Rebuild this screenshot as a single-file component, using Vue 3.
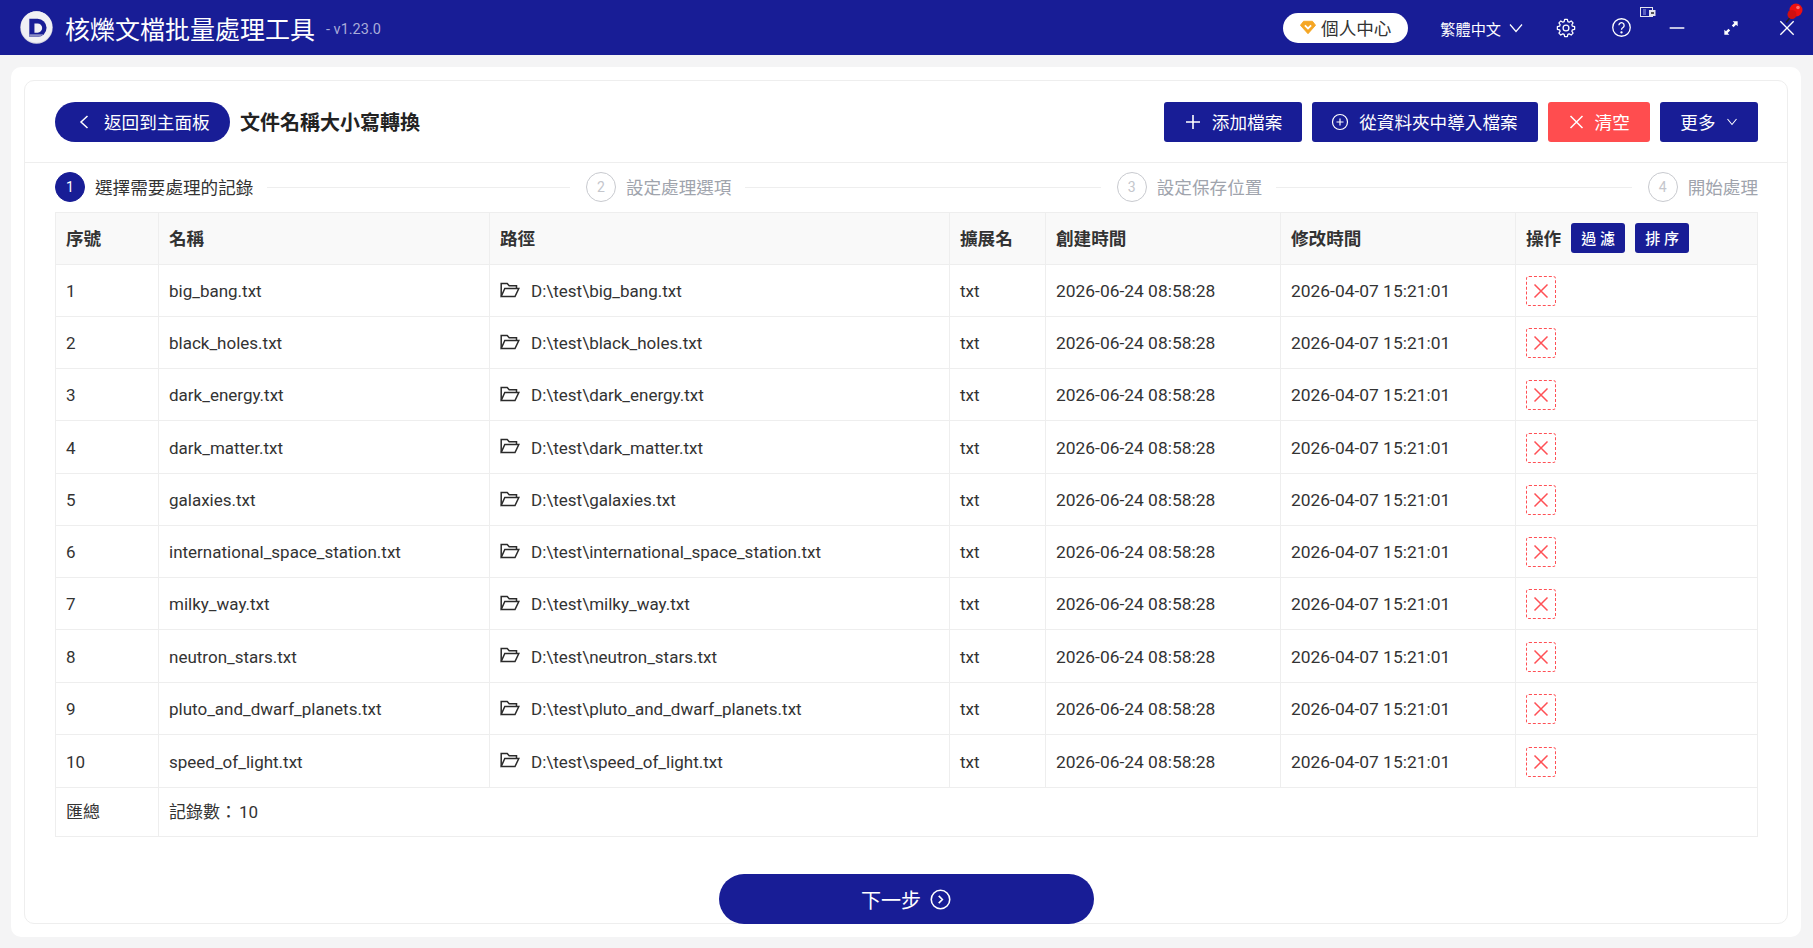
<template>
  <div class="app-page">
    <header class="titlebar">
      <div class="brand">
        <svg class="logo" viewBox="0 0 32 32">
          <circle cx="16" cy="16" r="15.700" fill="#d4d4e0" />
          <circle cx="16" cy="15.500" r="15.200" fill="#f0f0f4" />
          <path d="M9 7.500h8a8.750 8.750 0 0 1 0 17.500H9z" fill="#181d96" />
          <path d="M14 12h3a4.500 4.500 0 0 1 0 9h-3z" fill="#f0f0f4" />
          <path d="M9 25h8a8.750 8.750 0 0 0 6-2.400H9z" fill="#8a8cc4" />
        </svg>
        <span class="app-name">核爍文檔批量處理工具</span>
        <span class="version">- v1.23.0</span>
      </div>
      <div class="title-actions">
        <button class="vip-btn">
          <svg width="16" height="15" viewBox="0 0 18 16">
            <path d="M4 1h10l3.5 4.500L9 15 .5 5.500z" fill="#f5a623" stroke="#f5a623" stroke-linejoin="round" />
            <path d="M5.500 5.500 9 9l3.500-3.500" fill="none" stroke="#fff" stroke-width="2" />
          </svg>
          個人中心
        </button>
        <span class="lang">繁體中文
          <svg width="14" height="10" viewBox="0 0 14 10"><path d="M1 1.500 7 8.500l6-7" fill="none" stroke="#fff" stroke-width="1.200" /></svg>
        </span>
        <svg class="win-icon gear" viewBox="0 0 24 24" fill="none" stroke="#fff" stroke-width="1.500" stroke-linejoin="round">
          <path :d="gearPath" />
          <circle cx="12" cy="12" r="3.500" />
        </svg>
        <svg class="win-icon help" viewBox="0 0 24 24" fill="none" stroke="#fff" stroke-width="1.500">
          <circle cx="12" cy="12" r="10" />
          <path d="M9 9.500a3 3 0 1 1 4.700 2.500c-1 .7-1.700 1.300-1.700 2.500" />
          <circle cx="12" cy="17.500" r=".6" fill="#fff" />
        </svg>
        <svg class="win-icon min" viewBox="0 0 24 24"><path d="M4 12h16" stroke="#fff" stroke-width="1.600" /></svg>
        <svg class="win-icon expand" viewBox="0 0 24 24" fill="#fff">
          <path d="M20 4v6l-2-2-3 3-2-2 3-3-2-2zM4 20v-6l2 2 3-3 2 2-3 3 2 2z" />
        </svg>
        <svg class="win-icon close" viewBox="0 0 24 24"><path d="M4 4l16 16M20 4L4 20" stroke="#fff" stroke-width="1.600" /></svg>
      </div>
      <svg class="mini-widget" width="16" height="11" viewBox="0 0 16 11">
        <rect x=".5" y=".5" width="12" height="9" fill="#181d96" stroke="#e6e6ee" />
        <rect x="3" y="2" width="3" height="6" fill="#5a60c0" />
        <rect x="9" y="3" width="6.500" height="6" fill="#e6e6ee" />
        <rect x="11" y="5" width="3" height="2" fill="#555" />
      </svg>
      <svg class="pin" width="18" height="20" viewBox="0 0 18 20">
        <path d="M1 19.500l5-6" stroke="#222" stroke-width="1.500" />
        <circle cx="11" cy="7" r="6.500" fill="#ee1111" />
        <circle cx="7" cy="11.500" r="4.500" fill="#d01010" />
        <circle cx="13" cy="4.500" r="1.800" fill="#ff7070" />
      </svg>
    </header>

    <main class="outer">
      <section class="card">
        <div class="top-bar">
          <button class="back-btn">
            <svg width="12" height="16" viewBox="0 0 12 16"><path d="M9.500 2 3 8l6.500 6" fill="none" stroke="#fff" stroke-width="1.500" /></svg>
            返回到主面板
          </button>
          <h1 class="page-title">文件名稱大小寫轉換</h1>
          <div class="top-btns">
            <button class="btn">
              <svg width="18" height="16" viewBox="0 0 18 16"><path d="M9 1v14M2 8h14" stroke="#fff" stroke-width="1.600" /></svg>
              添加檔案
            </button>
            <button class="btn import">
              <svg width="18" height="18" viewBox="0 0 18 18" fill="none" stroke="#fff" stroke-width="1.200"><circle cx="9" cy="9" r="7.500" /><path d="M9 5.500v7M5.500 9h7" /></svg>
              從資料夾中導入檔案
            </button>
            <button class="btn danger">
              <svg width="17" height="16" viewBox="0 0 17 16"><path d="M2.500 2l12 12M14.500 2l-12 12" stroke="#fff" stroke-width="1.500" /></svg>
              清空
            </button>
            <button class="btn more">
              更多
              <svg width="12" height="10" viewBox="0 0 12 10"><path d="M1.500 2 6 7.500 10.500 2" fill="none" stroke="#fff" stroke-width="1.100" /></svg>
            </button>
          </div>
        </div>

        <div class="steps">
          <div v-for="(step, i) in steps" :key="step" class="step" :class="{ active: i === 0, last: i === steps.length - 1 }">
            <span class="step-num">{{ i + 1 }}</span>
            <span class="step-text">{{ step }}</span>
            <span v-if="i < steps.length - 1" class="step-line"></span>
          </div>
        </div>

        <table class="file-table">
          <colgroup>
            <col v-for="w in colWidths" :key="w.name" :style="{ width: w.width + 'px' }" />
          </colgroup>
          <thead>
            <tr>
              <th>序號</th>
              <th>名稱</th>
              <th>路徑</th>
              <th>擴展名</th>
              <th>創建時間</th>
              <th>修改時間</th>
              <th>
                <div class="op-head">
                  操作
                  <button class="mini-btn">過 濾</button>
                  <button class="mini-btn">排 序</button>
                </div>
              </th>
            </tr>
          </thead>
          <tbody>
            <tr v-for="(name, i) in files" :key="name">
              <td>{{ i + 1 }}</td>
              <td>{{ name }}</td>
              <td>
                <div class="path-cell">
                  <svg class="folder" width="20" height="16" viewBox="0 0 20 16" fill="none" stroke="#2b2b2b" stroke-width="1.500">
                    <path d="M1.200 14V1.500h6l2 2.300h7.300v2.700" />
                    <path d="M1.200 14.500h13.800l3.800-8H4.800z" />
                  </svg>
                  D:\test\{{ name }}
                </div>
              </td>
              <td>txt</td>
              <td class="time">2026-06-24 08:58:28</td>
              <td class="time">2026-04-07 15:21:01</td>
              <td>
                <span class="del-btn">
                  <svg width="16" height="16" viewBox="0 0 16 16"><path d="M1.500 1.500l13 13M14.500 1.500l-13 13" stroke="#ff5055" stroke-width="1.500" /></svg>
                </span>
              </td>
            </tr>
          </tbody>
          <tfoot>
            <tr>
              <td>匯總</td>
              <td colspan="6">記錄數：<span class="count">10</span></td>
            </tr>
          </tfoot>
        </table>

        <div class="next-wrap">
          <button class="next-btn">
            下一步
            <svg width="21" height="21" viewBox="0 0 20 20" fill="none" stroke="#fff" stroke-width="1.500"><circle cx="10" cy="10" r="8.800" /><path d="M8.300 6.500 11.800 10l-3.500 3.500" /></svg>
          </button>
        </div>
      </section>
    </main>
  </div>
</template>

<script setup>
const steps = ['選擇需要處理的記錄', '設定處理選項', '設定保存位置', '開始處理']

const colWidths = [
  { name: 'no', width: 103 },
  { name: 'name', width: 331 },
  { name: 'path', width: 460 },
  { name: 'ext', width: 96 },
  { name: 'created', width: 235 },
  { name: 'modified', width: 235 },
  { name: 'op', width: 242 }
]

const files = [
  'big_bang.txt',
  'black_holes.txt',
  'dark_energy.txt',
  'dark_matter.txt',
  'galaxies.txt',
  'international_space_station.txt',
  'milky_way.txt',
  'neutron_stars.txt',
  'pluto_and_dwarf_planets.txt',
  'speed_of_light.txt'
]

// eight soft teeth round the centre of a 24 box
const gearPath = Array.from({ length: 8 }, (_, i) => {
  const a = (i * Math.PI) / 4
  const pt = (r, d) => {
    const t = a + (d * Math.PI) / 180
    return `${(12 + r * Math.cos(t)).toFixed(2)} ${(12 + r * Math.sin(t)).toFixed(2)}`
  }
  return `${i ? 'L' : 'M'}${pt(8, -16)} L${pt(10.5, -9)} L${pt(10.5, 9)} L${pt(8, 16)}`
}).join(' ') + ' Z'
</script>

<style>
html, body {
  margin: 0;
  background: #f4f4f5;
}
</style>

<style scoped>
.app-page {
  height: 948px;
  display: flex;
  flex-direction: column;
  overflow: hidden;
  font-family: Roboto, "Noto Sans CJK TC", sans-serif;
  font-size: 17px;
  color: #333;
  background: #f4f4f5;
}

button {
  font-family: inherit;
  border: none;
  cursor: pointer;
}

.titlebar {
  position: relative;
  height: 55px;
  flex: none;
  display: flex;
  align-items: center;
  justify-content: space-between;
  background: #181d96;
  color: #fff;
}

.brand {
  display: flex;
  align-items: center;
  padding-left: 20px;
}

.logo {
  width: 33px;
  height: 33px;
}

.app-name {
  margin-left: 12px;
  font-size: 25px;
}

.version {
  margin: 3px 0 0 11px;
  font-size: 14.500px;
  color: #a9acd9;
}

.title-actions {
  display: flex;
  align-items: center;
  padding-right: 16px;
}

.vip-btn {
  width: 125px;
  height: 30px;
  display: flex;
  align-items: center;
  justify-content: center;
  gap: 5px;
  border-radius: 15px;
  background: #fff;
  color: #333;
  font-size: 17.600px;
}

.lang {
  display: flex;
  align-items: center;
  gap: 8px;
  margin-left: 32px;
  font-size: 15.200px;
}

.win-icon {
  width: 20px;
  height: 20px;
}

.gear { margin-left: 33px; }
.help { margin-left: 35px; width: 21px; height: 21px; }
.min { margin-left: 34px; width: 22px; height: 22px; }
.expand { margin-left: 33px; }
.close { margin-left: 36px; }

.mini-widget {
  position: absolute;
  left: 1640px;
  top: 7px;
}

.pin {
  position: absolute;
  left: 1785px;
  top: 3px;
}

.outer {
  flex: 1;
  display: flex;
  min-height: 0;
  margin: 12px 12px 11px 11px;
  padding: 13px;
  border-radius: 10px;
  background: #fff;
}

.card {
  flex: 1;
  display: flex;
  flex-direction: column;
  border: 1px solid #eeeeee;
  border-radius: 10px;
}

.top-bar {
  height: 82px;
  flex: none;
  display: flex;
  align-items: center;
  padding: 0 29px 0 30px;
  border-bottom: 1px solid #eeeeee;
  box-sizing: border-box;
}

.back-btn {
  width: 175px;
  height: 40px;
  display: flex;
  align-items: center;
  gap: 14px;
  padding-left: 23px;
  border-radius: 20px;
  background: #181d96;
  color: #fff;
  font-size: 17.600px;
}

.page-title {
  margin: 0 0 0 10px;
  font-size: 20px;
  font-weight: 700;
  color: #222;
}

.top-btns {
  display: flex;
  gap: 10px;
  margin-left: auto;
}

.btn {
  height: 40px;
  display: flex;
  align-items: center;
  gap: 10px;
  padding: 0 20px;
  border-radius: 3px;
  background: #181d96;
  color: #fff;
  font-size: 17.600px;
}

.btn.import {
  padding-left: 19px;
}

.btn.more {
  padding: 0 20.500px;
}

.btn.danger {
  background: #ff4d4f;
}

.steps {
  height: 49px;
  flex: none;
  display: flex;
  align-items: center;
  box-sizing: border-box;
  padding: 0 29px 1px 30px;
}

.step {
  flex: 1;
  display: flex;
  align-items: center;
  gap: 10px;
  color: #a0a4ad;
  font-size: 17.600px;
}

.step.last {
  flex: none;
}

.step-num {
  width: 28px;
  height: 28px;
  flex: none;
  display: flex;
  align-items: center;
  justify-content: center;
  border: 1px solid #c8cacf;
  border-radius: 50%;
  font-size: 14px;
  color: #c4c6cc;
}

.step-text {
  padding-bottom: 1px;
}

.step.active {
  color: #333;
}

.step.active .step-num {
  border-color: #181d96;
  background: #181d96;
  color: #fff;
}

.step-line {
  flex: 1;
  height: 1px;
  margin: 0 16px 0 4px;
  background: #eeeeee;
}

.file-table {
  width: 1702px;
  flex: none;
  margin-left: 30px;
  border-collapse: collapse;
  table-layout: fixed;
}

th, td {
  padding: 0 0 0 10px;
  border: 1px solid #eeeeee;
  text-align: left;
  box-sizing: border-box;
}

th {
  height: 52px;
  padding-bottom: 2px;
  background: #f9f9f9;
  font-size: 17.600px;
  font-weight: 700;
  color: #333;
}

td {
  height: 52px;
  font-size: 17px;
  font-weight: 400;
}

td.time {
  font-size: 17.400px;
}

tbody td {
  padding-top: 1px;
}

tbody tr:nth-child(4n) td,
tbody tr:last-child td {
  height: 53px;
}

tfoot td {
  height: 49px;
  padding-bottom: 3px;
}

.count {
  margin-left: 2px;
}

.op-head {
  display: flex;
  align-items: center;
  gap: 10px;
}

.mini-btn {
  width: 54px;
  height: 30px;
  padding: 0;
  border-radius: 3px;
  background: #181d96;
  color: #fff;
  font-size: 15px;
  font-weight: 500;
}

.path-cell {
  display: flex;
  align-items: center;
  gap: 11px;
}

.folder {
  flex: none;
  margin-top: -3px;
}

.del-btn {
  width: 28px;
  height: 28px;
  display: flex;
  align-items: center;
  justify-content: center;
  border: 1px dashed #ff5055;
  border-radius: 3px;
}

.next-wrap {
  display: flex;
  justify-content: center;
  margin-top: 37px;
}

.next-btn {
  width: 375px;
  height: 50px;
  display: flex;
  align-items: center;
  justify-content: center;
  gap: 9px;
  border-radius: 25px;
  background: #181d96;
  color: #fff;
  font-size: 20px;
}
</style>
